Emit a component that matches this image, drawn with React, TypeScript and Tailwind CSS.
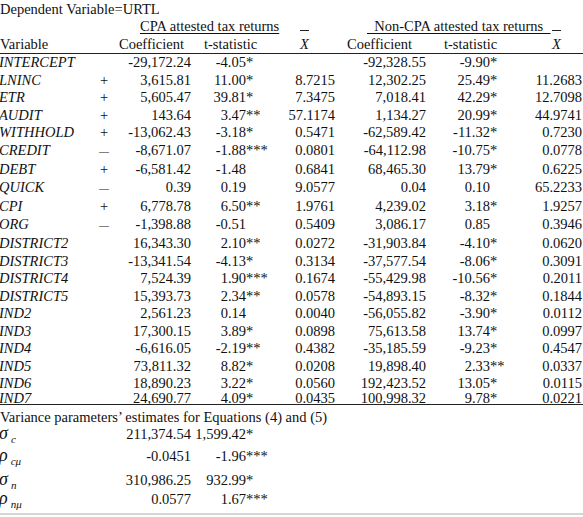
import React from "react";

type Row = {
  name: string;
  sign?: string;
  c1: string;
  t1: string;
  s1?: string;
  x1?: string;
  c2: string;
  t2: string;
  s2?: string;
  x2?: string;
  gap?: boolean;
};

const rows: Row[] = [
  { name: "INTERCEPT", c1: "-29,172.24", t1: "-4.05", s1: "*", c2: "-92,328.55", t2: "-9.90", s2: "*" },
  { name: "LNINC", sign: "+", c1: "3,615.81", t1: "11.00", s1: "*", x1: "8.7215", c2: "12,302.25", t2: "25.49", s2: "*", x2: "11.2683" },
  { name: "ETR", sign: "+", c1: "5,605.47", t1: "39.81", s1: "*", x1: "7.3475", c2: "7,018.41", t2: "42.29", s2: "*", x2: "12.7098" },
  { name: "AUDIT", sign: "+", c1: "143.64", t1: "3.47", s1: "**", x1: "57.1174", c2: "1,134.27", t2: "20.99", s2: "*", x2: "44.9741" },
  { name: "WITHHOLD", sign: "+", c1: "-13,062.43", t1: "-3.18", s1: "*", x1: "0.5471", c2: "-62,589.42", t2: "-11.32", s2: "*", x2: "0.7230" },
  { name: "CREDIT", sign: "—", c1: "-8,671.07", t1: "-1.88", s1: "***", x1: "0.0801", c2: "-64,112.98", t2: "-10.75", s2: "*", x2: "0.0778" },
  { name: "DEBT", sign: "+", c1: "-6,581.42", t1: "-1.48", x1: "0.6841", c2: "68,465.30", t2: "13.79", s2: "*", x2: "0.6225", gap: true },
  { name: "QUICK", sign: "—", c1: "0.39", t1: "0.19", x1: "9.0577", c2: "0.04", t2: "0.10", x2: "65.2233" },
  { name: "CPI", sign: "+", c1: "6,778.78", t1: "6.50", s1: "**", x1: "1.9761", c2: "4,239.02", t2: "3.18", s2: "*", x2: "1.9257", gap: true },
  { name: "ORG", sign: "—", c1: "-1,398.88", t1: "-0.51", x1: "0.5409", c2: "3,086.17", t2: "0.85", x2: "0.3946" },
  { name: "DISTRICT2", c1: "16,343.30", t1: "2.10", s1: "**", x1: "0.0272", c2: "-31,903.84", t2: "-4.10", s2: "*", x2: "0.0620", gap: true },
  { name: "DISTRICT3", c1: "-13,341.54", t1: "-4.13", s1: "*", x1: "0.3134", c2: "-37,577.54", t2: "-8.06", s2: "*", x2: "0.3091" },
  { name: "DISTRICT4", c1: "7,524.39", t1: "1.90", s1: "***", x1: "0.1674", c2: "-55,429.98", t2: "-10.56", s2: "*", x2: "0.2011" },
  { name: "DISTRICT5", c1: "15,393.73", t1: "2.34", s1: "**", x1: "0.0578", c2: "-54,893.15", t2: "-8.32", s2: "*", x2: "0.1844" },
  { name: "IND2", c1: "2,561.23", t1: "0.14", x1: "0.0040", c2: "-56,055.82", t2: "-3.90", s2: "*", x2: "0.0112" },
  { name: "IND3", c1: "17,300.15", t1: "3.89", s1: "*", x1: "0.0898", c2: "75,613.58", t2: "13.74", s2: "*", x2: "0.0997" },
  { name: "IND4", c1: "-6,616.05", t1: "-2.19", s1: "**", x1: "0.4382", c2: "-35,185.59", t2: "-9.23", s2: "*", x2: "0.4547" },
  { name: "IND5", c1: "73,811.32", t1: "8.82", s1: "*", x1: "0.0208", c2: "19,898.40", t2: "2.33", s2: "**", x2: "0.0337" },
  { name: "IND6", c1: "18,890.23", t1: "3.22", s1: "*", x1: "0.0560", c2: "192,423.52", t2: "13.05", s2: "*", x2: "0.0115" },
];

const last: Row = { name: "IND7", c1: "24,690.77", t1: "4.09", s1: "*", x1: "0.0435", c2: "100,998.32", t2: "9.78", s2: "*", x2: "0.0221" };

const params = [
  { sym: "σ", sub: "c", coef: "211,374.54", t: "1,599.42", s: "*", cls: "mt-[2px]" },
  { sym: "ρ", sub: "cμ", coef: "-0.0451", t: "-1.96", s: "***", cls: "mt-[8px]" },
  { sym: "σ", sub: "n", coef: "310,986.25", t: "932.99", s: "*", cls: "mt-[10px]" },
  { sym: "ρ", sub: "nμ", coef: "0.0577", t: "1.67", s: "***", cls: "mt-[5px]" },
];

function XBar() {
  return (
    <span className="inline-block -mt-[9px] border-t border-[#222] pt-[7px] leading-[12px] italic">
      X
    </span>
  );
}

function DataRow({ r, h = "h-[17.5px] leading-[17.5px]" }: { r: Row; h?: string }) {
  return (
    <div className={`flex items-baseline ${h} ${r.gap ? "mt-[2px]" : ""}`}>
      <div className="w-[91px] -ml-px shrink-0 italic">{r.name}</div>
      <div className="w-[28px] shrink-0 text-center">
        {r.sign === "—" ? <span className="text-[10px]">—</span> : r.sign || "\u00a0"}
      </div>
      <div className="w-[73px] shrink-0 text-right">{r.c1}</div>
      <div className="w-[55px] shrink-0 text-right">{r.t1}</div>
      <div className="w-[89px] shrink-0 flex items-baseline justify-between">
        <span>{r.s1 || "\u00a0"}</span>
        <span>{r.x1}</span>
      </div>
      <div className="w-[91px] shrink-0 text-right">{r.c2}</div>
      <div className="w-[64px] shrink-0 text-right">{r.t2}</div>
      <div className="w-[92px] shrink-0 flex items-baseline justify-between">
        <span>{r.s2 || "\u00a0"}</span>
        <span>{r.x2}</span>
      </div>
    </div>
  );
}

export default function App() {
  return (
    <div className="w-[583px] h-[517px] overflow-hidden bg-white text-[#111] text-[14.5px] font-['Liberation_Serif',serif]">
      <div className="h-[18px] leading-[18px] whitespace-nowrap">Dependent Variable=URTL</div>

      <div className="flex h-[17px] leading-[16px] items-baseline whitespace-nowrap">
        <div className="w-[367px] pl-[140px]">
          <span className="underline decoration-1 underline-offset-[2px]">CPA attested tax returns</span>
        </div>
        <span className="underline decoration-1 underline-offset-[2px]">
          {"\u00a0\u00a0Non-CPA attested tax returns\u00a0\u00a0"}
        </span>
      </div>

      <div className="flex items-baseline h-[19px] leading-[18px] border-b border-[#222] whitespace-nowrap">
        <div className="w-[119px] shrink-0">Variable</div>
        <div className="w-[85px] shrink-0">Coefficient</div>
        <div className="w-[96px] shrink-0">t-statistic</div>
        <div className="w-[47px] shrink-0">
          <XBar />
        </div>
        <div className="w-[97px] shrink-0">Coefficient</div>
        <div className="w-[108px] shrink-0">t-statistic</div>
        <div className="shrink-0">
          <XBar />
        </div>
      </div>

      {rows.map((r) => (
        <DataRow key={r.name} r={r} />
      ))}
      <div className="border-b border-[#222]">
        <DataRow r={last} h="h-[11.5px] leading-[11.5px]" />
      </div>

      <div className="mt-[5px] h-[14px] leading-[14px] whitespace-nowrap">
        Variance parameters’ estimates for Equations (4) and (5)
      </div>

      {params.map((p) => (
        <div key={p.sub} className={`flex items-baseline h-[14px] leading-[14px] ${p.cls}`}>
          <div className="w-[119px] -ml-px shrink-0 whitespace-nowrap">
            <span className="italic text-[18px] leading-[14px]">{p.sym}</span>
            <span className="italic text-[11px] ml-[3px] align-[-4px]">{p.sub}</span>
          </div>
          <div className="w-[73px] shrink-0 text-right">{p.coef}</div>
          <div className="w-[55px] shrink-0 text-right">{p.t}</div>
          <div className="shrink-0">{p.s}</div>
        </div>
      ))}

      <div className="mt-[8px] h-[2px] bg-[#d6d6d6]" />
    </div>
  );
}
